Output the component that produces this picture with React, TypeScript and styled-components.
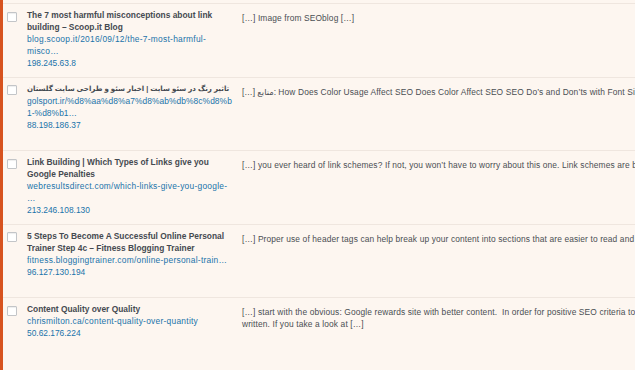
import React from "react";
import styled, { createGlobalStyle } from "styled-components";

const GlobalStyle = createGlobalStyle`
  html, body {
    margin: 0;
    padding: 0;
    background: #fdf6f0;
    overflow: hidden;
    width: 635px;
    height: 370px;
  }
  body {
    font-family: "Liberation Sans", "DejaVu Sans", Arial, sans-serif;
    -webkit-font-smoothing: antialiased;
  }
`;

const Table = styled.div`
  width: 960px;
  min-height: 370px;
  box-sizing: border-box;
  padding-top: 3px;
  border-left: 3px solid #d7531f;
  background: #fdf6f0;
`;

const Row = styled.div`
  display: grid;
  grid-template-columns: 24px 215px 1fr;
  height: 73.5px;
  box-sizing: border-box;
  border-top: 1px solid #efe6df;
`;

const CheckCell = styled.div`
  padding: 7.5px 0 0 4px;
`;

const Checkbox = styled.span`
  display: block;
  width: 10px;
  height: 10px;
  box-sizing: border-box;
  background: #fff;
  border: 1px solid #c3c5c8;
  border-radius: 1px;
  box-shadow: inset 0 1px 1px rgba(0, 0, 0, 0.07);
`;

const TitleCell = styled.div`
  padding: 5px 8px 0 0;
  font-size: 8.4px;
  line-height: 12px;
`;

const Title = styled.div<{ $rtl?: boolean }>`
  font-weight: bold;
  color: #454a50;
  font-size: ${(p) => (p.$rtl ? "7.1px" : "8.4px")};
  white-space: ${(p) => (p.$rtl ? "nowrap" : "normal")};
  padding-right: 3px;
`;

const Url = styled.a<{ $spacing: number }>`
  display: block;
  color: #1a73aa;
  text-decoration: none;
  letter-spacing: ${(p) => p.$spacing}px;
  overflow-wrap: anywhere;
`;

const Ip = styled.a`
  display: block;
  color: #1a73aa;
  text-decoration: none;
`;

const Excerpt = styled.div`
  padding-top: 8px;
  font-size: 8.4px;
  letter-spacing: 0.13px;
  line-height: 12px;
  color: #4a4e53;
  white-space: pre-wrap;
`;

type Comment = {
  title: string;
  url: string;
  spacing?: number;
  ip: string;
  excerpt: string;
  rtl?: boolean;
};

const comments: Comment[] = [
  {
    title: "The 7 most harmful misconceptions about link building – Scoop.it Blog",
    url: "blog.scoop.it/2016/09/12/the-7-most-harmful-misco…",
    ip: "198.245.63.8",
    excerpt: "[…] Image from SEOblog […]",
  },
  {
    title: "تاثیر رنگ در سئو سایت | اخبار سئو و طراحی سایت گلستان",
    url: "golsport.ir/%d8%aa%d8%a7%d8%ab%db%8c%d8%b1-%d8%b1…",
    spacing: 0.08,
    ip: "88.198.186.37",
    excerpt:
      "[…] منابع: How Does Color Usage Affect SEO Does Color Affect SEO SEO Do’s and Don’ts with Font Size and Color […]",
    rtl: true,
  },
  {
    title: "Link Building | Which Types of Links give you Google Penalties",
    url: "webresultsdirect.com/which-links-give-you-google-\u200B…",
    ip: "213.246.108.130",
    excerpt:
      "[…] you ever heard of link schemes? If not, you won’t have to worry about this one. Link schemes are basically […]",
  },
  {
    title: "5 Steps To Become A Successful Online Personal Trainer Step 4c – Fitness Blogging Trainer",
    url: "fitness.bloggingtrainer.com/online-personal-train…",
    ip: "96.127.130.194",
    excerpt:
      "[…] Proper use of header tags can help break up your content into sections that are easier to read and understand […]",
  },
  {
    title: "Content Quality over Quality",
    url: "chrismilton.ca/content-quality-over-quantity",
    ip: "50.62.176.224",
    excerpt:
      "[…] start with the obvious: Google rewards site with better content.  In order for positive SEO criteria to be effective, it must be well\nwritten. If you take a look at […]",
  },
];

export default function App() {
  return (
    <>
      <GlobalStyle />
      <Table>
        {comments.map((c) => (
          <Row key={c.ip}>
            <CheckCell>
              <Checkbox />
            </CheckCell>
            <TitleCell>
              <Title $rtl={c.rtl}>{c.title}</Title>
              <Url href="#" $spacing={c.spacing ?? 0.27}>
                {c.url}
              </Url>
              <Ip href="#">{c.ip}</Ip>
            </TitleCell>
            <Excerpt>{c.excerpt}</Excerpt>
          </Row>
        ))}
      </Table>
    </>
  );
}
